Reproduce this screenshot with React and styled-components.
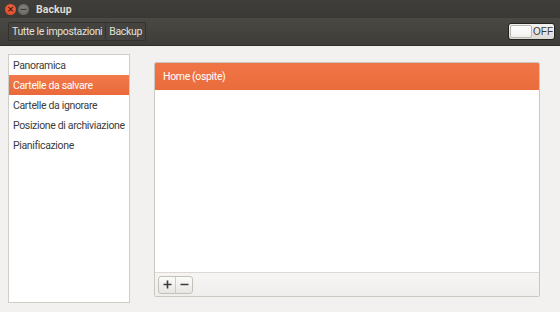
import React from "react";
import styled, { createGlobalStyle } from "styled-components";

const Global = createGlobalStyle`
  html, body { margin: 0; padding: 0; }
  body { background: #f2f1f0; font-family: Roboto, "DejaVu Sans", sans-serif; }
  #root { width: 560px; height: 312px; overflow: hidden; }
`;

const Window = styled.div`
  width: 560px;
  height: 312px;
  display: flex;
  flex-direction: column;
  background: #f2f1f0;
`;

const TitleBar = styled.div`
  height: 18px;
  display: flex;
  align-items: center;
  padding-left: 5px;
  gap: 2px;
  background: linear-gradient(#3f3e3a, #3a3935);
`;

const WinButton = styled.div`
  width: 11px;
  height: 11px;
  border-radius: 50%;
  background: ${(p) => (p.$close ? "radial-gradient(circle at 50% 40%, #f26d4b, #d6421f)" : "radial-gradient(circle at 50% 40%, #86847d, #5f5d57)")};
  display: flex;
  align-items: center;
  justify-content: center;
  color: ${(p) => (p.$close ? "#4a1608" : "#3a3935")};
  font-size: 9px;
  font-weight: bold;
  line-height: 1;
  font-family: "DejaVu Sans", sans-serif;
`;

const Title = styled.div`
  margin-left: 5px;
  color: #dfdbd2;
  font-weight: bold;
  font-size: 10.5px;
  letter-spacing: 0.1px;
`;

const Toolbar = styled.div`
  height: 27px;
  display: flex;
  align-items: center;
  justify-content: space-between;
  padding: 0 5px 0 8px;
  background: linear-gradient(#4b4944, #3e3c38);
  border-bottom: 1px solid #2f2e2b;
`;

const Crumbs = styled.div`
  display: flex;
  height: 17px;
  border: 1px solid #33322f;
  border-radius: 2px;
  background: #45433f;
`;

const Crumb = styled.div`
  display: flex;
  align-items: center;
  padding: 0 3px;
  font-size: 10.5px;
  letter-spacing: -0.35px;
  color: #e4e1da;
  & + & { border-left: 1px solid #35342f; }
`;

const Switch = styled.div`
  width: 45px;
  height: 15px;
  border-radius: 3px;
  background: linear-gradient(#f4f3f1, #dcdad6);
  border: 1px solid #25241f;
  display: flex;
  align-items: center;
  overflow: hidden;
`;

const Knob = styled.div`
  width: 22px;
  height: 13px;
  margin-left: 1px;
  border-radius: 2px;
  background: linear-gradient(#ffffff, #f1f0ee);
  border: 1px solid #b9b6b0;
  box-sizing: border-box;
`;

const SwitchLabel = styled.div`
  flex: 1;
  text-align: center;
  font-size: 10px;
  color: #3c3b37;
  font-family: "Liberation Sans", sans-serif;
`;

const Body = styled.div`
  flex: 1;
  display: flex;
  padding: 8px 20px 9px 8px;
  gap: 24px;
`;

const Sidebar = styled.div`
  width: 122px;
  box-sizing: border-box;
  background: #ffffff;
  border: 1px solid #cfcdc8;
  display: flex;
  flex-direction: column;
`;

const SideItem = styled.div`
  height: 20px;
  display: flex;
  align-items: center;
  padding-left: 4px;
  font-size: 10.5px;
  letter-spacing: -0.35px;
  color: ${(p) => (p.$active ? "#ffffff" : "#3c3c3c")};
  background: ${(p) => (p.$active ? "linear-gradient(#f27a4b, #e9693a)" : "transparent")};
  white-space: nowrap;
`;

const Main = styled.div`
  flex: 1;
  display: flex;
  flex-direction: column;
  padding-top: 8px;
  padding-bottom: 6px;
`;

const ListFrame = styled.div`
  flex: 1;
  display: flex;
  flex-direction: column;
  border: 1px solid #cbc8c2;
  border-radius: 2px;
  background: #fff;
  overflow: hidden;
`;

const ListHeader = styled.div`
  height: 27px;
  display: flex;
  align-items: center;
  padding-left: 8px;
  font-size: 10.5px;
  letter-spacing: -0.35px;
  color: #fff;
  background: linear-gradient(#f07546, #ea6c3c);
`;

const ListBody = styled.div`
  flex: 1;
  background: #fff;
`;

const ListToolbar = styled.div`
  height: 23px;
  display: flex;
  align-items: center;
  padding-left: 3px;
  border-top: 1px solid #dcd9d4;
  background: linear-gradient(#f6f5f4, #efeeec);
`;

const BtnGroup = styled.div`
  display: flex;
  border: 1px solid #c4c1bb;
  border-radius: 3px;
  background: linear-gradient(#fbfbfa, #e8e6e3);
  height: 16px;
`;

const SmallBtn = styled.div`
  width: 16px;
  display: flex;
  align-items: center;
  justify-content: center;
  color: #3c3b37;
  & + & { border-left: 1px solid #d0cdc8; }
`;

const Plus = () => (
  <svg width="9" height="9" viewBox="0 0 9 9">
    <path d="M4.5 0.5v8M0.5 4.5h8" stroke="#3c3b37" strokeWidth="1.6" />
  </svg>
);
const Minus = () => (
  <svg width="9" height="9" viewBox="0 0 9 9">
    <path d="M0.5 4.5h8" stroke="#3c3b37" strokeWidth="1.4" />
  </svg>
);

const items = [
  "Panoramica",
  "Cartelle da salvare",
  "Cartelle da ignorare",
  "Posizione di archiviazione",
  "Pianificazione",
];

export default function App() {
  return (
    <>
      <Global />
      <Window>
        <TitleBar>
          <WinButton $close>×</WinButton>
          <WinButton>−</WinButton>
          <Title>Backup</Title>
        </TitleBar>
        <Toolbar>
          <Crumbs>
            <Crumb>Tutte le impostazioni</Crumb>
            <Crumb>Backup</Crumb>
          </Crumbs>
          <Switch>
            <Knob />
            <SwitchLabel>OFF</SwitchLabel>
          </Switch>
        </Toolbar>
        <Body>
          <Sidebar>
            {items.map((t, i) => (
              <SideItem key={t} $active={i === 1}>{t}</SideItem>
            ))}
          </Sidebar>
          <Main>
            <ListFrame>
              <ListHeader>Home (ospite)</ListHeader>
              <ListBody />
              <ListToolbar>
                <BtnGroup>
                  <SmallBtn><Plus /></SmallBtn>
                  <SmallBtn><Minus /></SmallBtn>
                </BtnGroup>
              </ListToolbar>
            </ListFrame>
          </Main>
        </Body>
      </Window>
    </>
  );
}
